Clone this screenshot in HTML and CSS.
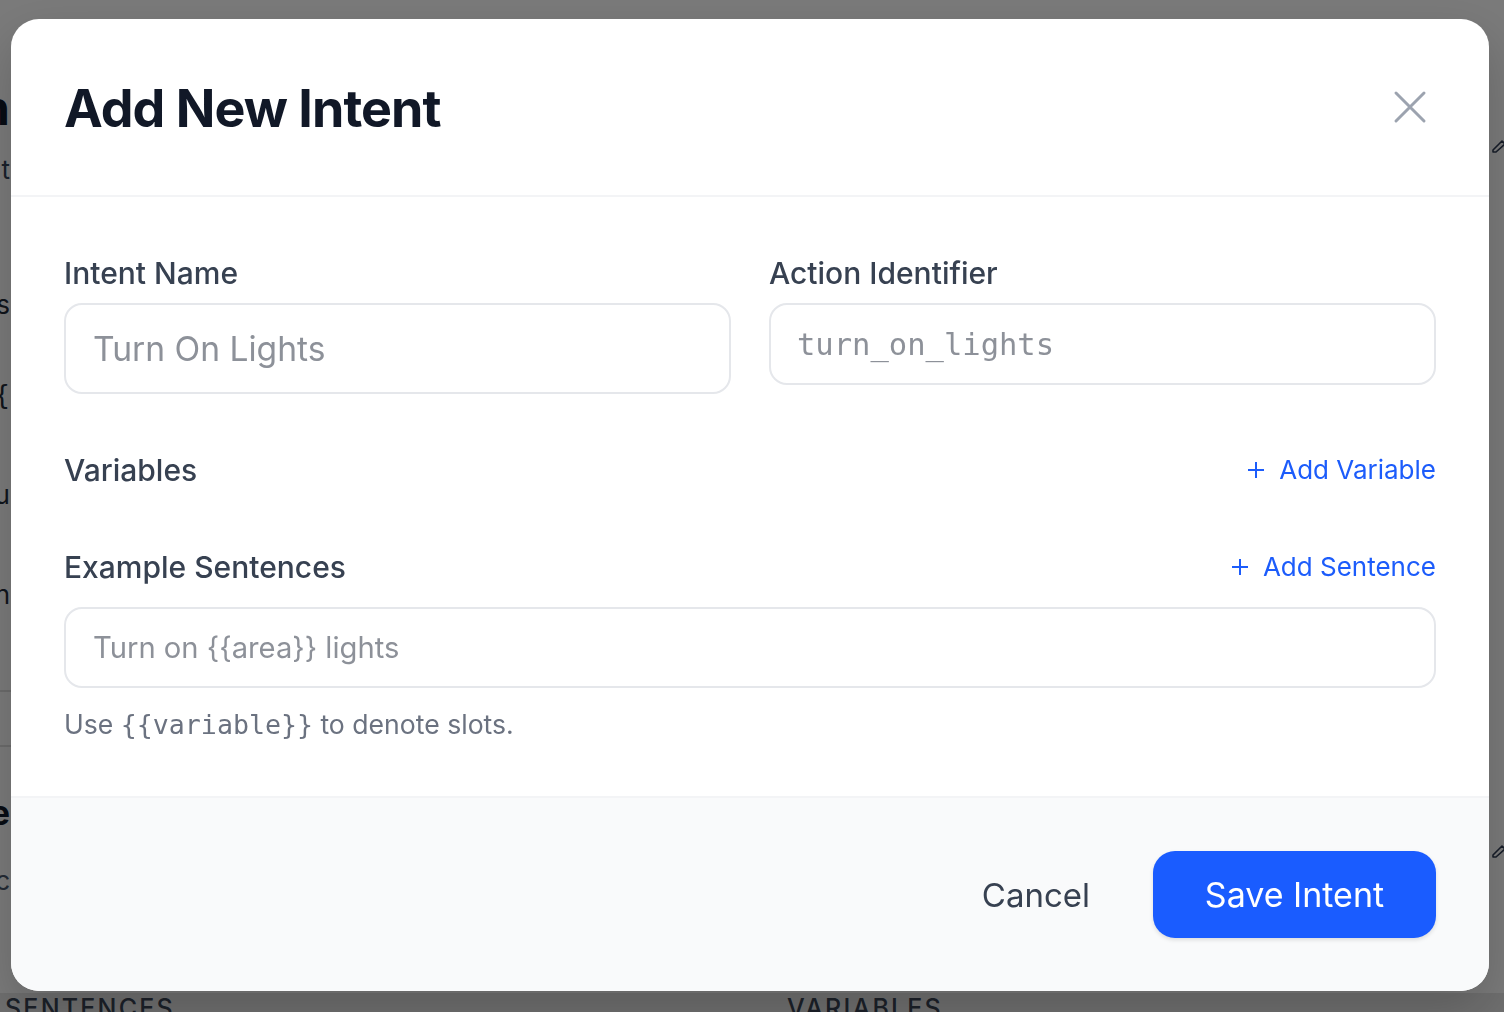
FILE: index.html
```html
<!DOCTYPE html>
<html lang="en">
<head>
<meta charset="utf-8">
<title>Add New Intent</title>
<link rel="stylesheet" href="styles.css">
</head>
<body>
<div class="bg">
  <div class="bg-main">
    <div class="bg-left">
      <div class="edge e1"><span>Action</span></div>
      <div class="edge e2"><span>Light</span></div>
      <div class="edge e3"><span>Sentences</span></div>
      <div class="edge e4"><span>{{</span></div>
      <div class="edge e5"><span>Turn on you</span></div>
      <div class="edge e6"><span>Turn on</span></div>
      <div class="bg-line l1"></div>
      <div class="bg-line l2"></div>
      <div class="edge e7"><span>Scene</span></div>
      <div class="edge e8"><span>scenc</span></div>
    </div>
    <div class="bg-right">
      <svg class="pencil p1" viewBox="0 0 20 20" width="20" height="20"><path d="M3 15 L12 6 L15 9 L6 17 L3 17 Z" fill="none" stroke="#2f3b52" stroke-width="1.6" stroke-linejoin="round"/></svg>
      <svg class="pencil p2" viewBox="0 0 20 20" width="20" height="20"><path d="M3 15 L12 6 L15 9 L6 17 L3 17 Z" fill="none" stroke="#2f3b52" stroke-width="1.6" stroke-linejoin="round"/></svg>
    </div>
  </div>
  <div class="bg-foot">
    <span class="bg-cap">Sentences</span>
    <span class="bg-cap">Variables</span>
  </div>
</div>

<div class="overlay">
  <div class="modal">
    <div class="modal-head">
      <h1 class="modal-title">Add New Intent</h1>
      <button class="close-btn" aria-label="Close">
        <svg viewBox="0 0 34 34" width="34" height="34"><path d="M3 3 L31 31 M31 3 L3 31" stroke="#9ca3af" stroke-width="3" stroke-linecap="round" fill="none"/></svg>
      </button>
    </div>
    <div class="modal-body">
      <div class="field-grid">
        <div class="field">
          <label class="field-label">Intent Name</label>
          <div class="input input-name"><span class="ph">Turn On Lights</span></div>
        </div>
        <div class="field">
          <label class="field-label">Action Identifier</label>
          <div class="input input-action"><span class="ph mono">turn_on_lights</span></div>
        </div>
      </div>
      <div class="section-row row-vars">
        <span class="field-label">Variables</span>
        <button class="link-btn">
          <svg viewBox="0 0 18 18" width="18" height="18"><path d="M9 1 V17 M1 9 H17" stroke="currentColor" stroke-width="2" fill="none"/></svg>
          <span>Add Variable</span>
        </button>
      </div>
      <div class="section-row row-sent">
        <span class="field-label">Example Sentences</span>
        <button class="link-btn">
          <svg viewBox="0 0 18 18" width="18" height="18"><path d="M9 1 V17 M1 9 H17" stroke="currentColor" stroke-width="2" fill="none"/></svg>
          <span>Add Sentence</span>
        </button>
      </div>
      <div class="input input-sent"><span class="ph">Turn on {{area}} lights</span></div>
      <p class="hint">Use <code>{{variable}}</code> to denote slots.</p>
    </div>
    <div class="modal-foot">
      <button class="btn-cancel">Cancel</button>
      <button class="btn-save">Save Intent</button>
    </div>
  </div>
</div>
</body>
</html>
```
FILE: styles.css
```css
* { box-sizing: border-box; }
html, body { margin: 0; padding: 0; }
body {
  width: 1504px;
  height: 1012px;
  overflow: hidden;
  background: #f5f5f5;
  font-family: Inter, "Noto Sans", "Liberation Sans", sans-serif;
}

/* ---------- background page ---------- */
.bg { display: flex; flex-direction: column; height: 1012px; }
.bg-main { display: flex; justify-content: space-between; height: 993px; flex: none; }
.bg-left { display: flex; flex-direction: column; width: 12px; }
.edge {
  width: 10px;
  display: flex;
  justify-content: flex-end;
  white-space: nowrap;
  color: #1f2937;
  font-size: 26px;
  line-height: 30px;
}
.e1 { margin-top: 84px; font-size: 48px; line-height: 48px; font-weight: 700; color: #111827; }
.e2 { margin-top: 23px; color: #334155; }
.e3 { margin-top: 105px; }
.e4 { margin-top: 60px; font-family: "DejaVu Sans Mono", monospace; }
.e5 { margin-top: 70px; }
.e6 { margin-top: 70px; }
.e7 { margin-top: 51px; font-size: 34px; font-weight: 700; color: #111827; }
.e8 { margin-top: 38px; color: #475569; }
.bg-line { width: 12px; border-top: 2px solid #d6d6d6; }
.l1 { margin-top: 80px; }
.l2 { margin-top: 53px; }
.bg-right { display: flex; flex-direction: column; width: 14px; align-items: flex-end; }
.pencil { flex: none; margin-right: -6px; }
.p1 { margin-top: 135px; }
.p2 { margin-top: 685px; }
.bg-foot {
  flex: 1;
  display: grid;
  grid-template-columns: 782px 1fr;
  padding-left: 5px;
  background: #dedede;
}
.bg-cap {
  font-size: 25px;
  line-height: 30px;
  letter-spacing: 2.2px;
  text-transform: uppercase;
  color: #374151;
  font-weight: 500;
}

/* ---------- overlay & modal ---------- */
.overlay {
  position: fixed;
  inset: 0;
  background: rgba(0, 0, 0, 0.5);
  display: flex;
  align-items: flex-start;
  justify-content: flex-start;
  padding: 19px 0 0 11px;
}
.modal {
  width: 1478px;
  background: #ffffff;
  border-radius: 28px;
  overflow: hidden;
  box-shadow: 0 20px 50px rgba(0, 0, 0, 0.18);
  display: flex;
  flex-direction: column;
}
.modal-head {
  height: 178px;
  flex: none;
  display: flex;
  align-items: center;
  justify-content: space-between;
  padding: 4px 62px 0 53px;
  border-bottom: 2px solid #f3f4f6;
}
.modal-title {
  margin: 0;
  font-size: 52px;
  font-weight: 700;
  color: #111827;
  letter-spacing: -0.95px;
  line-height: 1.2;
}
.close-btn {
  border: 0;
  background: none;
  padding: 0;
  margin-top: -4px;
  display: flex;
  cursor: pointer;
}

.modal-body {
  height: 599px;
  flex: none;
  padding: 58px 53px 0 53px;
  display: flex;
  flex-direction: column;
}
.field-grid {
  display: grid;
  grid-template-columns: 667px 667px;
  column-gap: 38px;
  align-items: start;
}
.field { display: flex; flex-direction: column; }
.field-label {
  font-size: 30px;
  line-height: 36px;
  font-weight: 500;
  color: #374151;
}
.field .field-label { margin-bottom: 12px; }

.input {
  border: 2px solid #e5e7eb;
  border-radius: 18px;
  background: #fff;
  display: flex;
  align-items: center;
}
.ph { color: #8d9199; white-space: nowrap; }
.mono { font-family: "DejaVu Sans Mono", "Liberation Mono", monospace; }
.input-name { height: 91px; padding-left: 27px; font-size: 33.6px; }
.input-action { height: 82px; padding-left: 26px; font-size: 30.5px; }
.input-sent { height: 81px; padding-left: 27px; font-size: 29.2px; margin-top: 22px; flex: none; }

.section-row {
  display: flex;
  align-items: center;
  justify-content: space-between;
  height: 36px;
  flex: none;
}
.row-vars { margin-top: 58px; }
.row-sent { margin-top: 61px; }
.link-btn {
  border: 0;
  background: none;
  padding: 0;
  display: flex;
  align-items: center;
  gap: 14px;
  color: #1c5cfb;
  font-family: inherit;
  font-size: 26px;
  line-height: 36px;
  cursor: pointer;
}
.link-btn svg { flex: none; }

.hint {
  margin: 18px 0 0;
  height: 36px;
  font-size: 26.6px;
  line-height: 36px;
  color: #6b7280;
}
.hint code {
  font-family: "DejaVu Sans Mono", "Liberation Mono", monospace;
  font-size: 26.6px;
  color: #6b7280;
}

.modal-foot {
  height: 195px;
  flex: none;
  background: #f9fafb;
  border-top: 2px solid #f3f4f6;
  display: flex;
  align-items: center;
  justify-content: flex-end;
  gap: 63px;
  padding-right: 53px;
}
.btn-cancel {
  border: 0;
  background: none;
  padding: 0;
  font-family: inherit;
  font-size: 33px;
  color: #374151;
  cursor: pointer;
}
.btn-save {
  width: 283px;
  height: 87px;
  border: 0;
  border-radius: 22px;
  background: #1a5cff;
  color: #ffffff;
  font-family: inherit;
  font-size: 34px;
  box-shadow: 0 2px 4px rgba(0, 0, 0, 0.12);
  cursor: pointer;
}
```
